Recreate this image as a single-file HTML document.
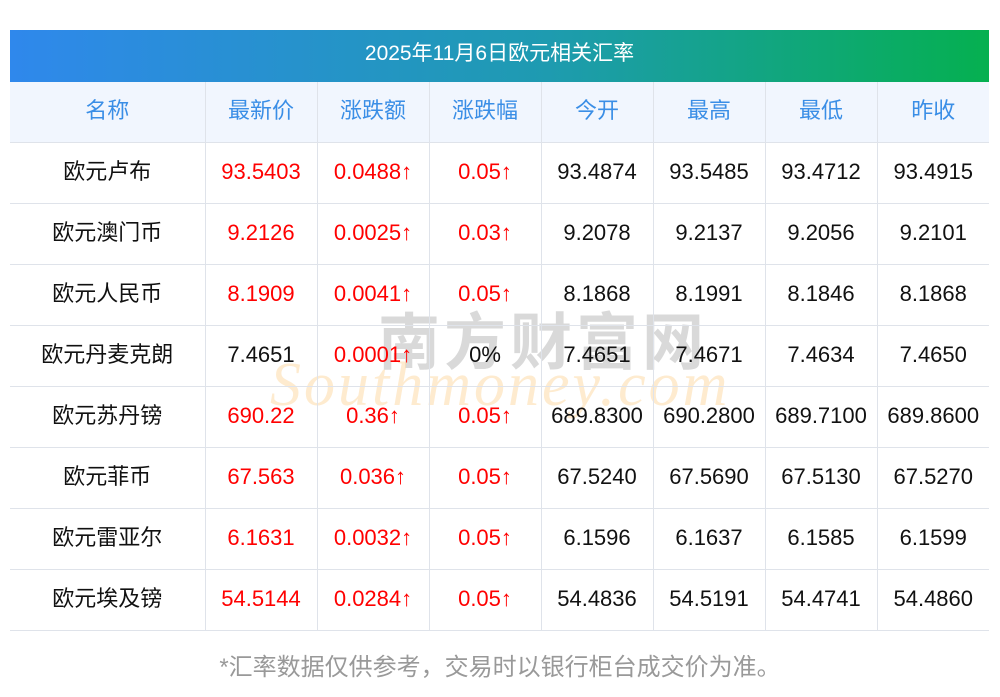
<!DOCTYPE html><html><head><meta charset="utf-8"><style>
body{margin:0;width:1000px;height:697px;background:#fff;font-family:"Liberation Sans","Noto Sans CJK SC",sans-serif;position:relative;overflow:hidden}
.title{position:absolute;left:10px;top:30px;width:979px;height:52px;background:linear-gradient(90deg,#2f88ec,#1e9bb0 55%,#05b050);color:#fff;font-size:21px;line-height:48px;text-align:center}
table{position:absolute;left:10px;top:82px;border-collapse:collapse;width:979px;table-layout:fixed}
td{height:58px;border-bottom:1px solid #dfe3ea;border-left:1px solid #dfe3ea;text-align:center;font-size:22px;line-height:22px;color:#111;padding:0 0 2px;vertical-align:middle;box-sizing:content-box}
td:first-child{border-left:none}
tr.h td{background:#f1f6fe;color:#3a8ee6}
.r{color:#f00}
.wm1{position:absolute;left:378px;top:292px;font-size:62px;color:rgba(185,185,185,.55);letter-spacing:4px;font-family:"Noto Sans CJK SC",sans-serif;font-weight:bold}
.wm2{position:absolute;left:270px;top:350px;font-size:62px;font-style:italic;color:rgba(253,215,160,.5);font-family:"Liberation Serif",serif;letter-spacing:3px}
.foot{position:absolute;top:647px;left:0;width:1000px;text-align:center;color:#999;font-size:24px}
</style></head><body>
<div class="title">2025年11月6日欧元相关汇率</div>
<div class="wm1">南方财富网</div>
<div class="wm2">Southmoney.com</div>
<table>
<colgroup><col style="width:195px"><col style="width:112px"><col style="width:112px"><col style="width:112px"><col style="width:112px"><col style="width:112px"><col style="width:112px"><col style="width:112px"></colgroup>
<tr class="h"><td>名称</td><td>最新价</td><td>涨跌额</td><td>涨跌幅</td><td>今开</td><td>最高</td><td>最低</td><td>昨收</td></tr>
<tr><td>欧元卢布</td><td class="r">93.5403</td><td class="r">0.0488↑</td><td class="r">0.05↑</td><td>93.4874</td><td>93.5485</td><td>93.4712</td><td>93.4915</td></tr>
<tr><td>欧元澳门币</td><td class="r">9.2126</td><td class="r">0.0025↑</td><td class="r">0.03↑</td><td>9.2078</td><td>9.2137</td><td>9.2056</td><td>9.2101</td></tr>
<tr><td>欧元人民币</td><td class="r">8.1909</td><td class="r">0.0041↑</td><td class="r">0.05↑</td><td>8.1868</td><td>8.1991</td><td>8.1846</td><td>8.1868</td></tr>
<tr><td>欧元丹麦克朗</td><td>7.4651</td><td class="r">0.0001↑</td><td>0%</td><td>7.4651</td><td>7.4671</td><td>7.4634</td><td>7.4650</td></tr>
<tr><td>欧元苏丹镑</td><td class="r">690.22</td><td class="r">0.36↑</td><td class="r">0.05↑</td><td>689.8300</td><td>690.2800</td><td>689.7100</td><td>689.8600</td></tr>
<tr><td>欧元菲币</td><td class="r">67.563</td><td class="r">0.036↑</td><td class="r">0.05↑</td><td>67.5240</td><td>67.5690</td><td>67.5130</td><td>67.5270</td></tr>
<tr><td>欧元雷亚尔</td><td class="r">6.1631</td><td class="r">0.0032↑</td><td class="r">0.05↑</td><td>6.1596</td><td>6.1637</td><td>6.1585</td><td>6.1599</td></tr>
<tr><td>欧元埃及镑</td><td class="r">54.5144</td><td class="r">0.0284↑</td><td class="r">0.05↑</td><td>54.4836</td><td>54.5191</td><td>54.4741</td><td>54.4860</td></tr>
</table>
<div class="foot">*汇率数据仅供参考，交易时以银行柜台成交价为准。</div>
</body></html>
